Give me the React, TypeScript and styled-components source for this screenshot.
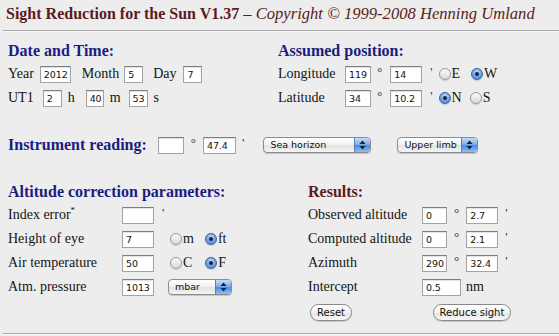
import React from 'react'
import styled, { createGlobalStyle } from 'styled-components'

const GlobalStyle = createGlobalStyle`
  html, body {
    margin: 0;
    padding: 0;
    background: #ededed;
  }
  body {
    font-family: "Liberation Serif", "Times New Roman", serif;
    font-size: 14px;
    color: #141414;
  }
`

const Page = styled.div`
  width: 559px;
  height: 336px;
  overflow: hidden;
  background: #ededed;
`

const Title = styled.h1`
  margin: 0;
  padding: 4px 0 0 6px;
  height: 20px;
  line-height: 20px;
  font-size: 16px;
  font-weight: bold;
  color: #5b1c20;
  white-space: nowrap;
`

const Credit = styled.span`
  font-weight: normal;
  font-style: italic;
  font-size: 16.6px;
`

const Rule = styled.div<{ $top: number }>`
  margin: ${(p) => p.$top}px 0 0 3px;
  border-top: 1px solid #a6a6a6;
  border-bottom: 1px solid #f9f9f9;
`

const Columns = styled.div<{ $left: number; $top: number }>`
  display: grid;
  grid-template-columns: ${(p) => p.$left}px 1fr;
  padding-left: 8px;
  margin-top: ${(p) => p.$top}px;
`

const Section = styled.div`
  display: flex;
  flex-direction: column;
`

const Heading = styled.h2<{ $red?: boolean }>`
  margin: 0 0 1px 0;
  height: 20px;
  line-height: 20px;
  font-size: 16px;
  font-weight: bold;
  color: ${(p) => (p.$red ? '#5b1c20' : '#1c1c80')};
  white-space: nowrap;
`

const Row = styled.div<{ $h?: number }>`
  display: flex;
  align-items: center;
  height: ${(p) => p.$h ?? 24}px;
  white-space: nowrap;
`

const Label = styled.span<{ $w?: number }>`
  flex: none;
  width: ${(p) => (p.$w ? `${p.$w}px` : 'auto')};
  line-height: 24px;
`

const Text = styled.span<{ $ml?: number }>`
  flex: none;
  margin-left: ${(p) => p.$ml ?? 0}px;
  line-height: 24px;
`

const Mark = styled.span<{ $ml?: number }>`
  flex: none;
  margin-left: ${(p) => p.$ml ?? 0}px;
  font-size: 13px;
  line-height: 24px;
  color: #333;
  position: relative;
  top: -2px;
`

const Star = styled.sup`
  font-size: 9px;
  line-height: 0;
`

const Field = styled.input<{ $w: number; $ml?: number }>`
  flex: none;
  box-sizing: border-box;
  width: ${(p) => p.$w}px;
  height: 17px;
  margin: 0 0 0 ${(p) => p.$ml ?? 0}px;
  padding: 1px 0 0 3px;
  border: 1px solid #a3a3a3;
  border-top-color: #7d7d7d;
  background: #fff;
  box-shadow: inset 0 1px 1px rgba(0, 0, 0, 0.12);
  font-family: "DejaVu Sans", sans-serif;
  font-size: 9.5px;
  letter-spacing: -0.1px;
  color: #111;
  outline: none;
`

const Radio = styled.span<{ $on?: boolean; $ml?: number }>`
  flex: none;
  position: relative;
  box-sizing: border-box;
  width: 12px;
  height: 12px;
  margin-left: ${(p) => p.$ml ?? 0}px;
  margin-right: 1px;
  border-radius: 50%;
  border: 1px solid ${(p) => (p.$on ? '#3f64a0' : '#9a9a9a')};
  background: ${(p) =>
    p.$on
      ? 'radial-gradient(circle at 50% 35%, #cfe2fa 0%, #79a9ea 45%, #3a7ad8 100%)'
      : 'linear-gradient(#fbfbfb, #d9d9d9)'};
  box-shadow: 0 1px 1px rgba(0, 0, 0, 0.15);
  &::after {
    content: '';
    display: ${(p) => (p.$on ? 'block' : 'none')};
    position: absolute;
    left: 3px;
    top: 3px;
    width: 4px;
    height: 4px;
    border-radius: 50%;
    background: #12233f;
  }
`

const Popup = styled.div<{ $w: number; $ml?: number }>`
  flex: none;
  display: flex;
  align-items: center;
  box-sizing: border-box;
  width: ${(p) => p.$w}px;
  height: 16px;
  margin-left: ${(p) => p.$ml ?? 0}px;
  border: 1px solid #8c8c8c;
  border-radius: 4px;
  background: linear-gradient(#ffffff, #f1f1f1 50%, #e2e2e2 51%, #f4f4f4);
  box-shadow: 0 1px 1px rgba(0, 0, 0, 0.18);
  overflow: hidden;
  font-family: "DejaVu Sans", sans-serif;
  font-size: 9.5px;
  color: #111;
`

const PopupText = styled.span`
  flex: 1;
  padding-left: 6px;
  line-height: 14px;
  overflow: hidden;
`

const Stepper = styled.span`
  flex: none;
  display: flex;
  align-items: center;
  justify-content: center;
  width: 15px;
  height: 100%;
  border-left: 1px solid #5c7fb3;
  background: linear-gradient(#c4dbf7, #7eaeec 45%, #4a8ae2 55%, #8fc0f5);
`

const Button = styled.button<{ $w: number; $ml?: number }>`
  flex: none;
  box-sizing: border-box;
  width: ${(p) => p.$w}px;
  height: 17px;
  margin: 0 0 0 ${(p) => p.$ml ?? 0}px;
  padding: 0;
  border: 1px solid #8a8a8a;
  border-radius: 9px;
  background: linear-gradient(#ffffff, #f3f3f3 50%, #e4e4e4 51%, #f7f7f7);
  box-shadow: 0 1px 1px rgba(0, 0, 0, 0.15);
  font-family: "DejaVu Sans", sans-serif;
  font-size: 10px;
  color: #111;
  line-height: 15px;
`

const Arrows = () => (
  <svg width="7" height="10" viewBox="0 0 7 10">
    <path d="M3.5 0.5 L6.5 4 L0.5 4 Z" fill="#16223a" />
    <path d="M3.5 9.5 L6.5 6 L0.5 6 Z" fill="#16223a" />
  </svg>
)

const Select = ({ w, ml, children }: { w: number; ml?: number; children: string }) => (
  <Popup $w={w} $ml={ml}>
    <PopupText>{children}</PopupText>
    <Stepper>
      <Arrows />
    </Stepper>
  </Popup>
)

const App: React.FC = () => {
  return (
    <Page>
      <GlobalStyle />
      <Title>
        Sight Reduction for the Sun V1.37 <Credit>– Copyright © 1999-2008 Henning Umland</Credit>
      </Title>
      <Rule $top={6} />

      <Columns $left={270} $top={9}>
        <Section>
          <Heading>Date and Time:</Heading>
          <Row>
            <Text>Year</Text>
            <Field $w={31} $ml={6} defaultValue="2012" />
            <Text $ml={11}>Month</Text>
            <Field $w={19} $ml={5} defaultValue="5" />
            <Text $ml={10}>Day</Text>
            <Field $w={19} $ml={7} defaultValue="7" />
          </Row>
          <Row>
            <Text>UT1</Text>
            <Field $w={19} $ml={9} defaultValue="2" />
            <Text $ml={6}>h</Text>
            <Field $w={18} $ml={11} defaultValue="40" />
            <Text $ml={6}>m</Text>
            <Field $w={19} $ml={8} defaultValue="53" />
            <Text $ml={6}>s</Text>
          </Row>
        </Section>
        <Section>
          <Heading>Assumed position:</Heading>
          <Row>
            <Label $w={67}>Longitude</Label>
            <Field $w={26} defaultValue="119" />
            <Mark $ml={6}>°</Mark>
            <Field $w={32} $ml={8} defaultValue="14" />
            <Mark $ml={8}>'</Mark>
            <Radio $ml={6} />
            <Text>E</Text>
            <Radio $ml={11} $on />
            <Text>W</Text>
          </Row>
          <Row>
            <Label $w={67}>Latitude</Label>
            <Field $w={26} defaultValue="34" />
            <Mark $ml={6}>°</Mark>
            <Field $w={32} $ml={8} defaultValue="10.2" />
            <Mark $ml={8}>'</Mark>
            <Radio $ml={6} $on />
            <Text>N</Text>
            <Radio $ml={8} />
            <Text>S</Text>
          </Row>
        </Section>
      </Columns>

      <Columns $left={270} $top={23}>
        <Row>
          <Heading as="span">Instrument reading:</Heading>
          <Field $w={26} $ml={11} />
          <Mark $ml={7}>°</Mark>
          <Field $w={33} $ml={7} defaultValue="47.4" />
          <Mark $ml={6}>'</Mark>
          <Select w={108} ml={19}>Sea horizon</Select>
          <Select w={81} ml={26}>Upper limb</Select>
        </Row>
      </Columns>

      <Columns $left={300} $top={25}>
        <Section>
          <Heading>Altitude correction parameters:</Heading>
          <Row>
            <Label $w={114}>
              Index error<Star>*</Star>
            </Label>
            <Field $w={32} />
            <Mark $ml={8}>'</Mark>
          </Row>
          <Row>
            <Label $w={114}>Height of eye</Label>
            <Field $w={32} defaultValue="7" />
            <Radio $ml={16} />
            <Text>m</Text>
            <Radio $ml={11} $on />
            <Text>ft</Text>
          </Row>
          <Row>
            <Label $w={114}>Air temperature</Label>
            <Field $w={32} defaultValue="50" />
            <Radio $ml={16} />
            <Text>C</Text>
            <Radio $ml={13} $on />
            <Text>F</Text>
          </Row>
          <Row>
            <Label $w={114}>Atm. pressure</Label>
            <Field $w={32} defaultValue="1013" />
            <Select w={64} ml={14}>mbar</Select>
          </Row>
        </Section>
        <Section>
          <Heading $red>Results:</Heading>
          <Row>
            <Label $w={114}>Observed altitude</Label>
            <Field $w={25} defaultValue="0" />
            <Mark $ml={7}>°</Mark>
            <Field $w={32} $ml={7} defaultValue="2.7" />
            <Mark $ml={7}>'</Mark>
          </Row>
          <Row>
            <Label $w={114}>Computed altitude</Label>
            <Field $w={25} defaultValue="0" />
            <Mark $ml={7}>°</Mark>
            <Field $w={32} $ml={7} defaultValue="2.1" />
            <Mark $ml={7}>'</Mark>
          </Row>
          <Row>
            <Label $w={114}>Azimuth</Label>
            <Field $w={25} defaultValue="290" />
            <Mark $ml={7}>°</Mark>
            <Field $w={32} $ml={7} defaultValue="32.4" />
            <Mark $ml={7}>'</Mark>
          </Row>
          <Row>
            <Label $w={114}>Intercept</Label>
            <Field $w={39} defaultValue="0.5" />
            <Text $ml={5}>nm</Text>
          </Row>
          <Row $h={26}>
            <Button $w={42} $ml={2}>Reset</Button>
            <Button $w={78} $ml={81}>Reduce sight</Button>
          </Row>
        </Section>
      </Columns>
      <Rule $top={8} />
    </Page>
  )
}

export default App
